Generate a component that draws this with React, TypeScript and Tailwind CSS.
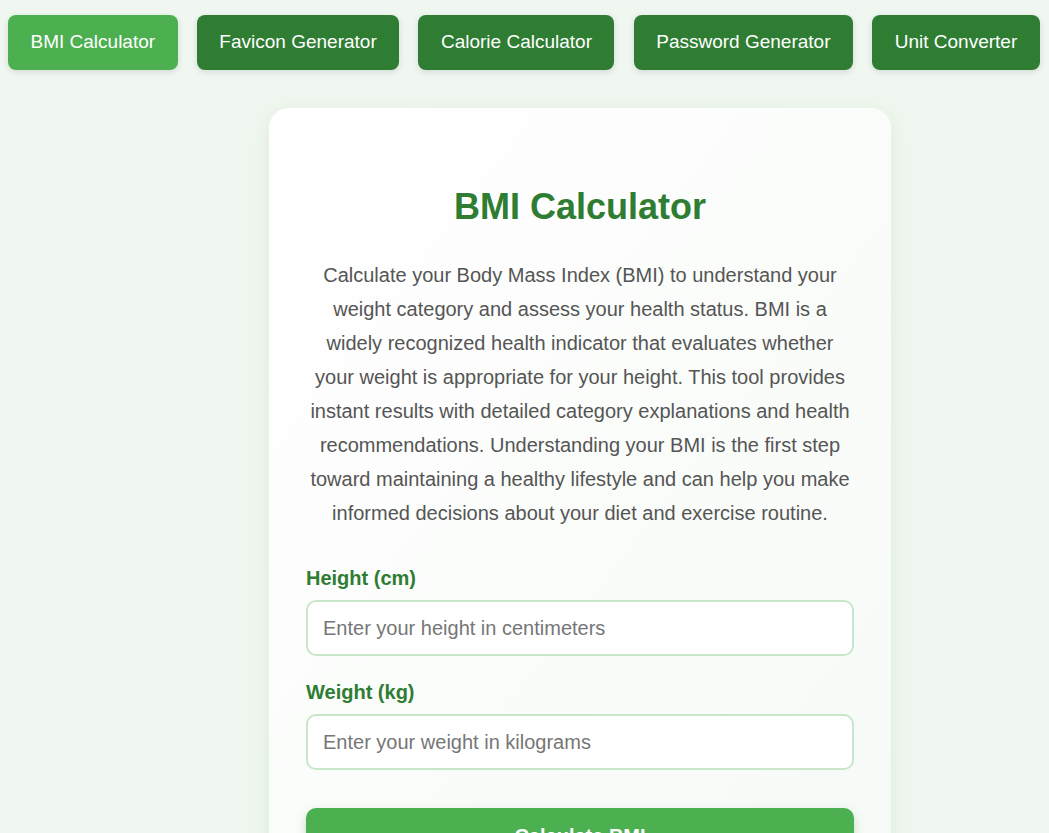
import React from 'react';

const tools = ['BMI Calculator', 'Favicon Generator', 'Calorie Calculator', 'Password Generator', 'Unit Converter'];

function NavButton({ label, active }: { label: string; active: boolean }) {
  return (
    <button
      className={`h-[55px] rounded-lg px-[22.5px] text-[19px] text-white shadow-[0_2px_6px_rgba(0,0,0,0.12)] ${
        active ? 'bg-[#4caf50]' : 'bg-[#2e7d32]'
      }`}
    >
      {label}
    </button>
  );
}

function Field({ label, placeholder }: { label: string; placeholder: string }) {
  return (
    <div className="flex flex-col">
      <label className="text-[20px] font-bold leading-[22px] text-[#2e7d32]">{label}</label>
      <input
        type="number"
        placeholder={placeholder}
        className="mt-[11px] h-[56px] rounded-[10px] border-2 border-[#c8e6c9] bg-white px-[15px] text-[20px] text-[#333] outline-none placeholder:text-[#767676]"
      />
    </div>
  );
}

export default function App() {
  return (
    <div className="min-h-[833px] bg-[#f0f7f0] pt-[15px] font-['Liberation_Sans',Arial,sans-serif]">
      <nav className="flex gap-[19.25px] pl-[8px]">
        {tools.map((t, i) => (
          <NavButton key={t} label={t} active={i === 0} />
        ))}
      </nav>

      <main className="mt-[38px] flex pl-[269px]">
        <div className="w-[622px] rounded-[20px] bg-gradient-to-br from-white to-[#f6faf6] px-[37px] pb-[40px] pt-[77px] shadow-[0_6px_24px_rgba(46,125,50,0.10)]">
          <h1 className="text-center text-[36px] font-bold leading-[43px] text-[#2e7d32]">BMI Calculator</h1>
          <p className="mt-[30px] text-center text-[20px] leading-[34px] text-[#555]">
            Calculate your Body Mass Index (BMI) to understand your weight category and assess your health status. BMI is a
            widely recognized health indicator that evaluates whether your weight is appropriate for your height. This tool
            provides instant results with detailed category explanations and health recommendations. Understanding your BMI is
            the first step toward maintaining a healthy lifestyle and can help you make informed decisions about your diet and
            exercise routine.
          </p>

          <div className="mt-[37px] flex flex-col gap-[25px]">
            <Field label="Height (cm)" placeholder="Enter your height in centimeters" />
            <Field label="Weight (kg)" placeholder="Enter your weight in kilograms" />
          </div>

          <button className="mt-[38px] h-[56px] w-full rounded-[10px] bg-[#4caf50] text-[20px] font-bold text-white shadow-[0_4px_10px_rgba(46,125,50,0.25)]">
            Calculate BMI
          </button>
        </div>
      </main>
    </div>
  );
}
